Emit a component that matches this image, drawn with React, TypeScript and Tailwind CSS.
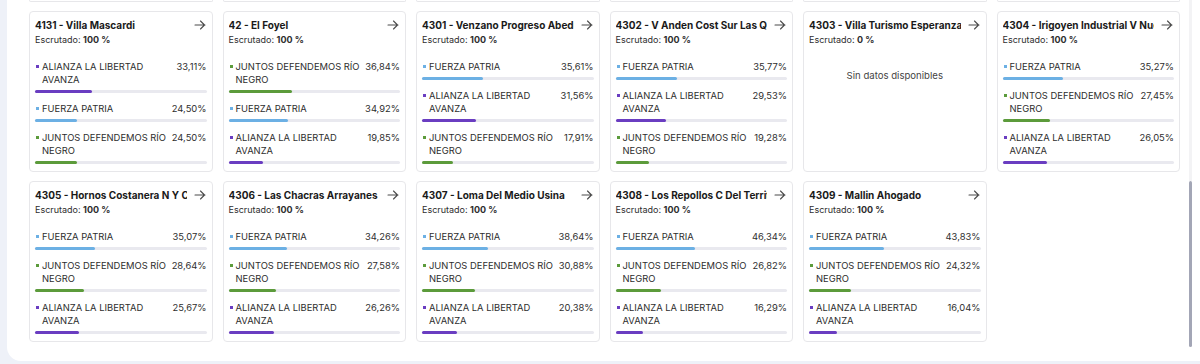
type Party = 'LLA' | 'FP' | 'JDRN'

interface Result {
  party: Party
  pct: number
}

interface Circuit {
  title: string
  scrutinized: number
  results: Result[]
}

const parties: Record<Party, { name: string; color: string }> = {
  LLA: { name: 'ALIANZA LA LIBERTAD AVANZA', color: 'bg-[#6a3dc1]' },
  FP: { name: 'FUERZA PATRIA', color: 'bg-[#6cb0e4]' },
  JDRN: { name: 'JUNTOS DEFENDEMOS RÍO NEGRO', color: 'bg-[#5c9b3b]' },
}

const circuits: Circuit[] = [
  {
    title: '4131 - Villa Mascardi',
    scrutinized: 100,
    results: [
      { party: 'LLA', pct: 33.11 },
      { party: 'FP', pct: 24.5 },
      { party: 'JDRN', pct: 24.5 },
    ],
  },
  {
    title: '42 - El Foyel',
    scrutinized: 100,
    results: [
      { party: 'JDRN', pct: 36.84 },
      { party: 'FP', pct: 34.92 },
      { party: 'LLA', pct: 19.85 },
    ],
  },
  {
    title: '4301 - Venzano Progreso Abedules',
    scrutinized: 100,
    results: [
      { party: 'FP', pct: 35.61 },
      { party: 'LLA', pct: 31.56 },
      { party: 'JDRN', pct: 17.91 },
    ],
  },
  {
    title: '4302 - V Anden Cost Sur Las Quintas',
    scrutinized: 100,
    results: [
      { party: 'FP', pct: 35.77 },
      { party: 'LLA', pct: 29.53 },
      { party: 'JDRN', pct: 19.28 },
    ],
  },
  {
    title: '4303 - Villa Turismo Esperanza',
    scrutinized: 0,
    results: [],
  },
  {
    title: '4304 - Irigoyen Industrial V Nueva',
    scrutinized: 100,
    results: [
      { party: 'FP', pct: 35.27 },
      { party: 'JDRN', pct: 27.45 },
      { party: 'LLA', pct: 26.05 },
    ],
  },
  {
    title: '4305 - Hornos Costanera N Y Centro',
    scrutinized: 100,
    results: [
      { party: 'FP', pct: 35.07 },
      { party: 'JDRN', pct: 28.64 },
      { party: 'LLA', pct: 25.67 },
    ],
  },
  {
    title: '4306 - Las Chacras Arrayanes',
    scrutinized: 100,
    results: [
      { party: 'FP', pct: 34.26 },
      { party: 'JDRN', pct: 27.58 },
      { party: 'LLA', pct: 26.26 },
    ],
  },
  {
    title: '4307 - Loma Del Medio Usina',
    scrutinized: 100,
    results: [
      { party: 'FP', pct: 38.64 },
      { party: 'JDRN', pct: 30.88 },
      { party: 'LLA', pct: 20.38 },
    ],
  },
  {
    title: '4308 - Los Repollos C Del Territorio',
    scrutinized: 100,
    results: [
      { party: 'FP', pct: 46.34 },
      { party: 'JDRN', pct: 26.82 },
      { party: 'LLA', pct: 16.29 },
    ],
  },
  {
    title: '4309 - Mallin Ahogado',
    scrutinized: 100,
    results: [
      { party: 'FP', pct: 43.83 },
      { party: 'JDRN', pct: 24.32 },
      { party: 'LLA', pct: 16.04 },
    ],
  },
]

function formatPct(n: number) {
  return n.toFixed(2).replace('.', ',') + '%'
}

function Arrow() {
  return (
    <svg width="12" height="10" viewBox="0 0 12 10" fill="none" className="shrink-0">
      <path d="M1 5h10M6.5 1l4 4-4 4" stroke="#4b4b4b" strokeWidth="1.1" strokeLinecap="round" strokeLinejoin="round" />
    </svg>
  )
}

function ResultRow({ result }: { result: Result }) {
  const party = parties[result.party]
  return (
    <div className="flex flex-col gap-[4px]">
      <div className="flex items-start justify-between gap-[3px] text-[9.4px] leading-[13px] text-[#2e2e2e]">
        <span className="flex gap-[3px] pl-[1px]">
          <span className={`mt-[5px] h-[3px] w-[3px] shrink-0 ${party.color}`} />
          <span>{party.name}</span>
        </span>
        <span className="shrink-0">{formatPct(result.pct)}</span>
      </div>
      <div className="h-[3px] w-full rounded-full bg-[#e9e9ef]">
        <div className={`h-full rounded-full ${party.color}`} style={{ width: `${result.pct}%` }} />
      </div>
    </div>
  )
}

function CircuitCard({ circuit }: { circuit: Circuit }) {
  return (
    <div className="flex h-[161px] flex-col rounded-[4px] border border-[#e7e7ea] bg-white px-[5px] pt-[5px]">
      <div className="flex items-center gap-[7px] pr-[1px]">
        <span className="flex-1 overflow-hidden whitespace-nowrap text-[10px] font-bold leading-[16px] text-[#1a1a1a]">
          {circuit.title}
        </span>
        <Arrow />
      </div>
      <div className="text-[9px] leading-[14px] text-[#2e2e2e]">
        Escrutado: <span className="font-bold">{circuit.scrutinized} %</span>
      </div>
      {circuit.results.length === 0 ? (
        <div className="mt-[22px] text-center text-[9.6px] leading-[14px] text-[#444]">Sin datos disponibles</div>
      ) : (
        <div className="mt-[13px] flex flex-col gap-[9px]">
          {circuit.results.map((r) => (
            <ResultRow key={r.party} result={r} />
          ))}
        </div>
      )}
    </div>
  )
}

export default function App() {
  return (
    <div
      className="h-[364px] w-[1200px] overflow-hidden bg-[#eef1f8]"
      style={{ fontFamily: 'Inter, "Noto Sans", sans-serif' }}
    >
      <div className="ml-[7px] flex h-[361px] rounded-bl-[14px] bg-white">
        <div className="flex-1 pl-[22px] pr-[6px]">
          <div className="grid grid-cols-6 gap-x-[10px]">
            {Array.from({ length: 6 }).map((_, i) => (
              <div key={i} className="h-[2px] rounded-b-[4px] border-x border-b border-[#e7e7ea]" />
            ))}
          </div>
          <div className="mt-[9px] grid grid-cols-6 gap-x-[10px] gap-y-[9px]">
            {circuits.map((c) => (
              <CircuitCard key={c.title} circuit={c} />
            ))}
          </div>
        </div>
        <div className="flex w-[14px] flex-col pl-[3px]">
          <div className="h-[181px] w-[3px] bg-[#f3f3f5]" />
          <div className="h-[166px] w-[3px] rounded-full bg-[#a3a6b6]" />
        </div>
      </div>
    </div>
  )
}
